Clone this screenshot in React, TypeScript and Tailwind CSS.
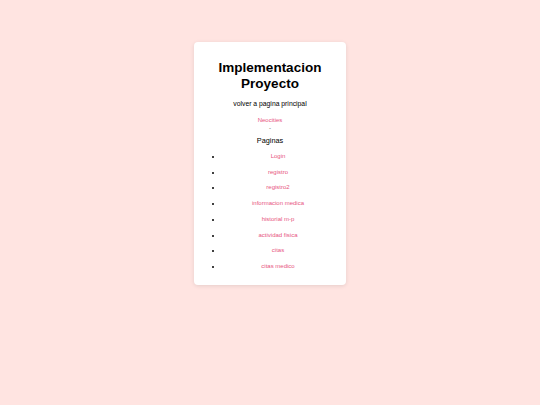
import React from "react";

const items = [
  "Login",
  "registro",
  "registro2",
  "informacion medica",
  "historial m-p",
  "actividad fisica",
  "citas",
  "citas medico",
];

export default function App() {
  return (
    <div
      className="w-[540px] h-[405px] bg-[#ffe4e1] flex justify-center items-start pt-[42px]"
      style={{ fontFamily: '"Liberation Sans", Arial, sans-serif' }}
    >
      <div className="w-[152px] bg-white rounded-[4px] shadow-[0_1px_4px_rgba(0,0,0,0.1)] px-[12px] pt-[18px] pb-[10px] text-center text-black">
        <h1 className="text-[13.5px] leading-[16px] font-bold text-black">
          Implementacion Proyecto
        </h1>
        <p className="mt-[8px] text-[6.8px] leading-[8px]">volver a pagina principal</p>
        <div className="mt-[8px] text-[6px] leading-[8px] text-[#e75480]">Neocities</div>
        <div className="text-[6px] leading-[8px] text-[#555]">-</div>
        <h3 className="mt-[5px] text-[7.3px] leading-[8px]">Paginas</h3>
        <ul className="mt-[4px] list-disc pl-[16px] text-[6px] leading-[15.7px]">
          {items.map((it) => (
            <li key={it} className="text-[#e75480] marker:text-black">
              {it}
            </li>
          ))}
        </ul>
      </div>
    </div>
  );
}
